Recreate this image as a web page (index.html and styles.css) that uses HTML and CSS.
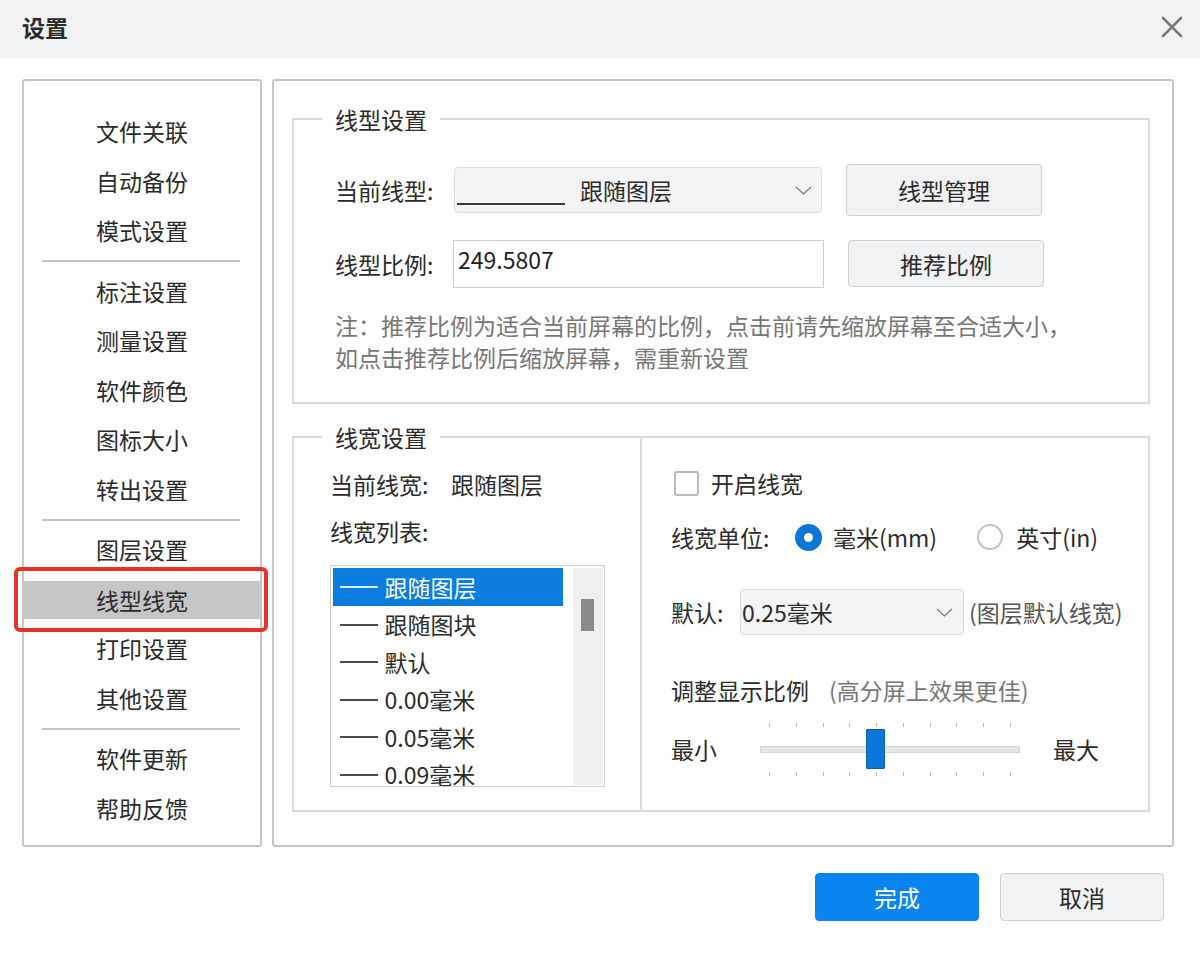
FILE: index.html
```html
<!DOCTYPE html>
<html lang="zh-CN">
<head>
<meta charset="utf-8">
<title>设置</title>
<link rel="stylesheet" href="styles.css">
</head>
<body>
<div class="dialog">
  <header class="titlebar">
    <span class="title">设置</span>
    <svg class="close" width="22" height="22" viewBox="0 0 22 22" aria-label="关闭">
      <path d="M2 2L20 20M20 2L2 20" stroke="#7a7a7a" stroke-width="2.6" stroke-linecap="round"/>
    </svg>
  </header>

  <div class="content">
    <nav class="nav">
      <div class="nav-item">文件关联</div>
      <div class="nav-item">自动备份</div>
      <div class="nav-item">模式设置</div>
      <div class="nav-sep"></div>
      <div class="nav-item">标注设置</div>
      <div class="nav-item">测量设置</div>
      <div class="nav-item">软件颜色</div>
      <div class="nav-item">图标大小</div>
      <div class="nav-item">转出设置</div>
      <div class="nav-sep"></div>
      <div class="nav-item">图层设置</div>
      <div class="nav-item active">线型线宽<span class="mark"></span></div>
      <div class="nav-item">打印设置</div>
      <div class="nav-item">其他设置</div>
      <div class="nav-sep"></div>
      <div class="nav-item">软件更新</div>
      <div class="nav-item">帮助反馈</div>
    </nav>

    <main class="panel">
      <section class="group group-linetype">
        <div class="group-title">线型设置</div>
        <div class="row row-type">
          <span class="label label-type">当前线型:</span>
          <div class="select select-type">
            <span class="line-sample"></span>
            <span class="select-text">跟随图层</span>
            <svg class="chevron" width="17" height="9" viewBox="0 0 17 9"><path d="M1 1l7.5 7 7.5-7" stroke="#7a7a7a" stroke-width="1.2" fill="none"/></svg>
          </div>
          <button class="btn btn-manage">线型管理</button>
        </div>
        <div class="row row-scale">
          <span class="label label-scale">线型比例:</span>
          <div class="input-scale">249.5807</div>
          <button class="btn btn-recommend">推荐比例</button>
        </div>
        <p class="note">注：推荐比例为适合当前屏幕的比例，点击前请先缩放屏幕至合适大小，<br>如点击推荐比例后缩放屏幕，需重新设置</p>
      </section>

      <section class="group group-width">
        <div class="group-title title-width">线宽设置</div>
        <div class="cols">
          <div class="col-left">
            <div class="info-row"><span class="label label-current">当前线宽:</span><span>跟随图层</span></div>
            <div class="info-row list-label">线宽列表:</div>
            <div class="listbox">
              <div class="list-items">
                <div class="list-item sel"><span class="dash"></span>跟随图层</div>
                <div class="list-item"><span class="dash"></span>跟随图块</div>
                <div class="list-item"><span class="dash"></span>默认</div>
                <div class="list-item"><span class="dash"></span>0.00毫米</div>
                <div class="list-item"><span class="dash"></span>0.05毫米</div>
                <div class="list-item"><span class="dash"></span>0.09毫米</div>
              </div>
              <div class="scroll"><div class="scroll-thumb"></div></div>
            </div>
          </div>

          <div class="col-right">
            <div class="check-row"><span class="checkbox"></span>开启线宽</div>
            <div class="unit-row">
              <span class="label label-unit">线宽单位:</span>
              <span class="radio on"></span><span>毫米(mm)</span>
              <span class="radio off"></span><span>英寸(in)</span>
            </div>
            <div class="default-row">
              <span class="label label-default">默认:</span>
              <div class="select select-default">
                <span class="select-text">0.25毫米</span>
                <svg class="chevron" width="17" height="9" viewBox="0 0 17 9"><path d="M1 1l7.5 7 7.5-7" stroke="#7a7a7a" stroke-width="1.2" fill="none"/></svg>
              </div>
              <span class="hint">(图层默认线宽)</span>
            </div>
            <div class="scale-row">
              <span>调整显示比例</span>
              <span class="scale-hint">(高分屏上效果更佳)</span>
            </div>
            <div class="slider-row">
              <span class="slider-label">最小</span>
              <div class="slider">
                <div class="ticks ticks-top">
                  <i class="tick"></i><i class="tick"></i><i class="tick"></i><i class="tick"></i><i class="tick"></i>
                  <i class="tick"></i><i class="tick"></i><i class="tick"></i><i class="tick"></i><i class="tick"></i>
                </div>
                <div class="track"></div>
                <div class="ticks ticks-bottom">
                  <i class="tick"></i><i class="tick"></i><i class="tick"></i><i class="tick"></i><i class="tick"></i>
                  <i class="tick"></i><i class="tick"></i><i class="tick"></i><i class="tick"></i><i class="tick"></i>
                </div>
                <div class="slider-thumb"></div>
              </div>
              <span class="slider-max">最大</span>
            </div>
          </div>
        </div>
      </section>
    </main>
  </div>

  <footer class="footer">
    <button class="btn btn-primary">完成</button>
    <button class="btn btn-cancel">取消</button>
  </footer>
</div>
</body>
</html>
```

FILE: styles.css
```css
* {
  box-sizing: border-box;
}

body {
  margin: 0;
  width: 1200px;
  height: 962px;
  overflow: hidden;
  background: #fff;
  font-family: "Noto Sans CJK SC", "Microsoft YaHei", sans-serif;
  font-size: 23px;
  line-height: 32px;
  color: #2b2b2b;
}

/* title bar */
.titlebar {
  height: 58px;
  background: #f1f2f4;
  display: flex;
  align-items: center;
  justify-content: space-between;
  padding: 0 17px 4px 22px;
}

.title {
  font-weight: 700;
  font-size: 23px;
  color: #2a2a2a;
}

.close {
  display: block;
}

/* two-column body */
.content {
  display: flex;
  gap: 10px;
  padding: 21px 26px 0 22px;
}

/* left navigation */
.nav {
  width: 240px;
  height: 768px;
  border: 2px solid #c6c6c6;
  border-radius: 3px;
  padding-top: 26.25px;
}

.nav-item {
  height: 49.5px;
  line-height: 49.5px;
  text-align: center;
  white-space: nowrap;
}

.nav-item.active {
  position: relative;
  height: 38px;
  line-height: 38px;
  margin: 5.75px 0;
  background: #c6c6c6;
}

.mark {
  position: absolute;
  left: -10px;
  right: -8px;
  top: -13.75px;
  bottom: -13.25px;
  border: 4px solid #e5322b;
  border-radius: 6px;
}

.nav-sep {
  height: 2px;
  margin: 4.5px 20px 4.5px 18px;
  background: #c4c4c4;
}

/* right settings panel */
.panel {
  flex: 1;
  height: 768px;
  border: 2px solid #c6c6c6;
  border-radius: 3px;
  padding: 37px 22px 0 18px;
}

.group {
  border: 2px solid #dadada;
}

.group-title {
  position: relative;
  z-index: 1;
  width: fit-content;
  height: 30px;
  line-height: 30px;
  margin: -16px 0 -14px -13px;
  padding: 0 13px;
  background: #fff;
  white-space: nowrap;
}

.title-width {
  margin-left: 28px;
}

.label {
  flex: none;
  white-space: nowrap;
}

/* line type group */
.group-linetype {
  height: 286px;
  padding-left: 41px;
}

.row {
  display: flex;
}

.row-type {
  margin-top: 44px;
  height: 52px;
  align-items: center;
}

.label-type {
  width: 119px;
}

.select {
  display: flex;
  align-items: center;
  background: #f3f4f6;
  border: 1.5px solid #dedede;
  border-radius: 4px;
  white-space: nowrap;
}

.select-type {
  width: 368px;
  height: 46px;
  padding: 0 9px 0 2px;
}

.line-sample {
  width: 108px;
  height: 2px;
  margin-top: 28px;
  background: #3a3a3a;
}

.select-type .select-text {
  margin-left: 15px;
}

.chevron {
  margin-left: auto;
  display: block;
}

.btn {
  font: inherit;
  color: inherit;
  text-align: center;
  padding: 0;
  background: #f1f2f4;
  border: 1.5px solid #d0d0d0;
  border-radius: 4px;
}

.btn-manage {
  width: 196px;
  height: 52px;
  margin-left: 24px;
}

.row-scale {
  margin-top: 24px;
  align-items: flex-start;
}

.label-scale {
  width: 118px;
  line-height: 48px;
}

.input-scale {
  width: 371px;
  height: 48px;
  border: 1.5px solid #cfcfcf;
  padding: 2px 0 0 4px;
  color: #1e1e1e;
}

.btn-recommend {
  width: 196px;
  height: 47px;
  margin-left: 24px;
}

.note {
  margin: 21px 0 0;
  font-size: 23px;
  line-height: 32px;
  color: #777;
  white-space: nowrap;
}

/* line width group */
.group-width {
  height: 376px;
  margin-top: 32px;
}

.cols {
  display: flex;
  height: 372px;
}

.col-left {
  width: 346px;
  padding: 30px 0 0 36px;
}

.info-row {
  display: flex;
  height: 32px;
  white-space: nowrap;
}

.label-current {
  width: 121px;
}

.list-label {
  margin-top: 15px;
}

.listbox {
  display: flex;
  width: 275px;
  height: 222px;
  margin-top: 18px;
  padding: 1.5px;
  border: 1.5px solid #cbcbcb;
  overflow: hidden;
}

.list-items {
  width: 230px;
  flex: none;
}

.list-item {
  display: flex;
  align-items: center;
  height: 38px;
  padding-left: 7px;
  white-space: nowrap;
  color: #2b2b2b;
}

.list-item:nth-child(even) {
  height: 37px;
}

.list-item.sel {
  background: #0b7ddf;
  color: #fff;
}

.dash {
  align-self: flex-start;
  width: 38px;
  height: 2px;
  margin: 18px 7px 0 0;
  background: currentColor;
  opacity: 0.85;
}

.scroll {
  width: 30px;
  margin-left: 10px;
  background: #f0f0f0;
}

.scroll-thumb {
  width: 13px;
  height: 32px;
  margin: 31px 0 0 8px;
  background: #8a8a8a;
}

.col-right {
  flex: 1;
  border-left: 2px solid #dadada;
  padding: 29px 0 0 29px;
}

.check-row,
.unit-row,
.scale-row {
  display: flex;
  align-items: center;
  height: 32px;
  white-space: nowrap;
}

.checkbox {
  width: 25px;
  height: 25px;
  margin: 0 12px 0 3px;
  border: 2px solid #b9b9b9;
  border-radius: 3px;
}

.unit-row {
  margin-top: 22px;
}

.label-unit {
  width: 124px;
}

.radio {
  flex: none;
  border-radius: 50%;
}

.radio.on {
  width: 27px;
  height: 27px;
  margin-right: 11px;
  border: 9px solid #0a76d6;
}

.radio.off {
  width: 26px;
  height: 26px;
  margin: 0 13px 0 40px;
  border: 2px solid #c2c2c2;
}

.default-row {
  display: flex;
  align-items: center;
  margin-top: 36px;
  white-space: nowrap;
}

.label-default {
  width: 69px;
}

.select-default {
  width: 224px;
  height: 46px;
  padding: 0 10px 0 1px;
}

.hint {
  margin-left: 5px;
  color: #555;
}

.scale-row {
  margin-top: 39px;
}

.scale-hint {
  margin-left: 20px;
  font-size: 23px;
  color: #777;
}

/* display scale slider */
.slider-row {
  display: flex;
  align-items: center;
  height: 54px;
  margin-top: 16px;
  white-space: nowrap;
}

.slider-label {
  width: 89px;
}

.slider {
  position: relative;
  display: flex;
  flex-direction: column;
  width: 260px;
  height: 54px;
}

.ticks {
  display: flex;
  justify-content: space-between;
  height: 4px;
  padding: 0 9px;
}

.ticks-top {
  margin-top: 1px;
}

.ticks-bottom {
  margin-top: 19px;
}

.tick {
  width: 1px;
  background: #bdbdbd;
}

.track {
  height: 7px;
  margin-top: 19px;
  background: #e6e6e6;
  border: 1px solid #d5d5d5;
}

.slider-thumb {
  position: absolute;
  left: 106px;
  top: 7px;
  width: 19px;
  height: 40px;
  background: #0a76d6;
  border: 1px solid #0861b2;
  border-radius: 1px;
}

.slider-max {
  margin-left: 33px;
}

/* dialog buttons */
.footer {
  display: flex;
  justify-content: flex-end;
  gap: 21px;
  padding: 26px 36px 0 0;
}

.footer .btn {
  width: 164px;
  height: 48px;
}

.btn-primary {
  background: #0a84ef;
  border-color: #0a84ef;
  color: #fff;
}

.btn-cancel {
  background: #f1f2f4;
  border-color: #cfcfcf;
}
```
